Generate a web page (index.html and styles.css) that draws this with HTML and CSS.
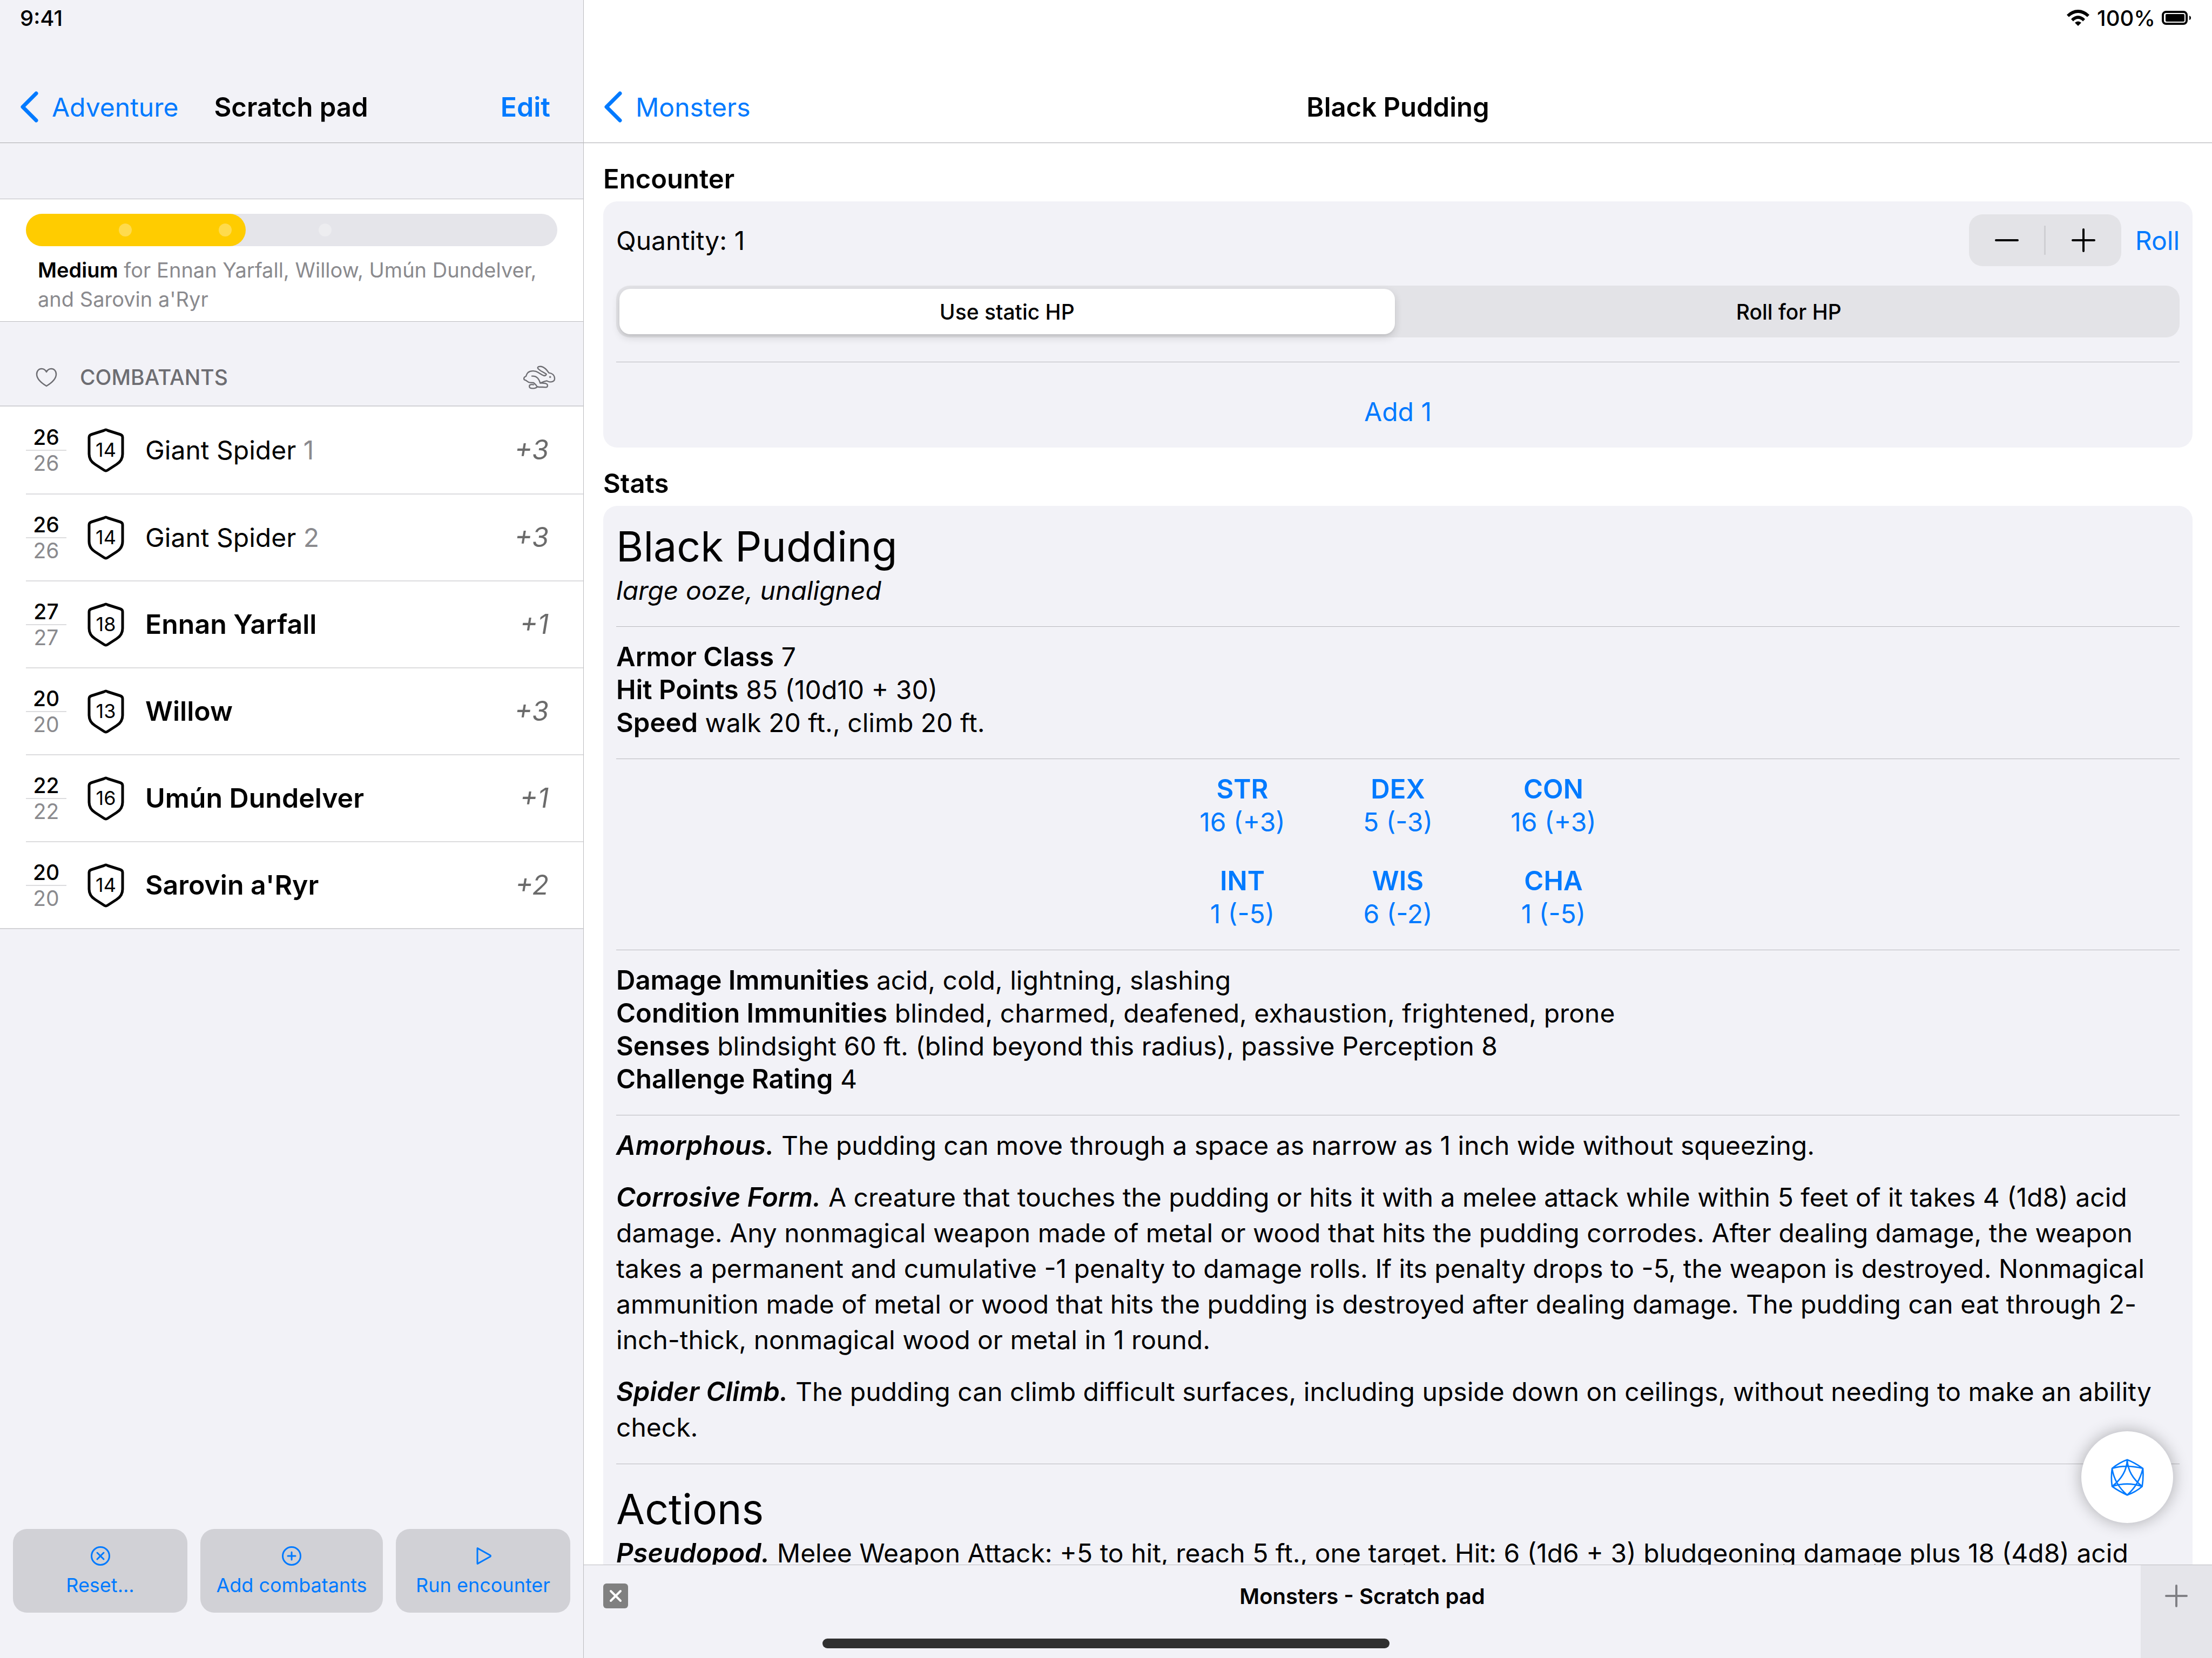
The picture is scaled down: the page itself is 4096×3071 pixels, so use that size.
FILE: index.html
```html
<!DOCTYPE html>
<html lang="en">
<head>
<meta charset="utf-8">
<meta name="viewport" content="width=device-width, initial-scale=1">
<title>Scratch pad – Black Pudding</title>
<link rel="stylesheet" href="styles.css">
</head>
<body>
<svg class="sprite" aria-hidden="true">
  <symbol id="chevron" viewBox="0 0 36 60"><path d="M31 5 6 30l25 25" fill="none" stroke="currentColor" stroke-width="7" stroke-linecap="round" stroke-linejoin="round"/></symbol>
  <symbol id="shield" viewBox="0 0 68 82"><path d="M34 3 Q35 3 38 4.500L60 11.500Q65 13 65 17V48Q65 60 54 67L37 78Q34 80 31 78L14 67Q3 60 3 48V17Q3 13 8 11.500L30 4.500Q33 3 34 3Z" fill="none" stroke="currentColor" stroke-width="5" stroke-linejoin="round"/></symbol>
</svg>
<div class="app">
  <aside class="sidebar">
    <header class="top">
      <div class="status"><time>9:41</time></div>
      <nav class="navbar">
        <a class="back" href="#adventure"><svg class="chevron"><use href="#chevron"/></svg>Adventure</a>
        <h1 class="nav-title">Scratch pad</h1>
        <button class="link-button strong">Edit</button>
      </nav>
    </header>

    <section class="difficulty">
      <div class="meter">
        <div class="meter-fill"></div>
        <i class="dot" style="left:18.7%"></i>
        <i class="dot" style="left:37.5%"></i>
        <i class="dot" style="left:56.3%"></i>
      </div>
      <p class="caption"><strong>Medium</strong> for Ennan Yarfall, Willow, Umún Dundelver, and Sarovin a'Ryr</p>
    </section>

    <section class="combatants">
      <header class="list-head">
        <svg class="heart" viewBox="0 0 40 36"><path d="M20 34C10 28 2 21 2 12 2 6 6 2 11 2c4 0 7 2 9 6 2-4 5-6 9-6 5 0 9 4 9 10 0 9-8 16-18 22Z" fill="none" stroke="currentColor" stroke-width="2.500" stroke-linejoin="round"/></svg>
        <h2>COMBATANTS</h2>
        <svg class="hare" viewBox="90 56 180 132" fill="none" stroke="currentColor" stroke-width="7" stroke-linecap="round" stroke-linejoin="round"><path d="M205 113C190 107 182 100 172 94 160 86 132 81 116 95 108 103 107 110 105 116 96 119 92 126 94 133 97 138 104 137 109 142 116 148 120 151 128 151L147 152C153 157 162 163 166 173 172 177 184 176 196 176L216 177C226 177 226 166 222 160 215 152 196 154 186 154M218 104C200 92 180 84 171 72 167 62 180 60 192 62 208 66 222 82 232 97 248 98 262 108 264 126 265 139 258 146 245 147 234 149 230 145 220 141 206 143 195 149 184 154 178 132 166 112 138 115M205 113C211 113 217 110 218 104M147 163C138 160 124 161 124 170 122 180 130 183 142 183 156 184 166 178 168 173"/><circle cx="239" cy="120" r="2"/></svg>
      </header>
      <ul class="rows">
        <li><div class="hp"><b>26</b><span>26</span></div><div class="ac"><svg><use href="#shield"/></svg><span>14</span></div><div class="name">Giant Spider <em>1</em></div><i class="mod">+3</i></li>
        <li><div class="hp"><b>26</b><span>26</span></div><div class="ac"><svg><use href="#shield"/></svg><span>14</span></div><div class="name">Giant Spider <em>2</em></div><i class="mod">+3</i></li>
        <li><div class="hp"><b>27</b><span>27</span></div><div class="ac"><svg><use href="#shield"/></svg><span>18</span></div><div class="name"><strong>Ennan Yarfall</strong></div><i class="mod">+1</i></li>
        <li><div class="hp"><b>20</b><span>20</span></div><div class="ac"><svg><use href="#shield"/></svg><span>13</span></div><div class="name"><strong>Willow</strong></div><i class="mod">+3</i></li>
        <li><div class="hp"><b>22</b><span>22</span></div><div class="ac"><svg><use href="#shield"/></svg><span>16</span></div><div class="name"><strong>Umún Dundelver</strong></div><i class="mod">+1</i></li>
        <li><div class="hp"><b>20</b><span>20</span></div><div class="ac"><svg><use href="#shield"/></svg><span>14</span></div><div class="name"><strong>Sarovin a'Ryr</strong></div><i class="mod">+2</i></li>
      </ul>
    </section>

    <footer class="actions">
      <button><svg viewBox="0 0 38 38"><circle cx="19" cy="19" r="16.500"/><path d="M13 13l12 12M25 13 13 25"/></svg>Reset...</button>
      <button><svg viewBox="0 0 38 38"><circle cx="19" cy="19" r="16.500"/><path d="M19 12v14M12 19h14"/></svg>Add combatants</button>
      <button><svg viewBox="0 0 38 38"><path d="M8 5v28q0 1 1 0L32 20q1-1 0-2L9 5q-1-1-1 0Z"/></svg>Run encounter</button>
    </footer>
  </aside>

  <main class="detail">
    <header class="top">
      <div class="status end">
        <svg class="wifi" viewBox="0 0 42 32"><path d="M0 10.500Q9 1 21 1t21 9.500l-4 4Q30 7 21 7T4 14.500ZM8 18.500Q14 12 21 12t13 6.500l-4 4Q26 18 21 18t-9 4.500ZM15 25q6-5 12 0l-6 6Z" fill="currentColor"/></svg>
        <span>100%</span>
        <svg class="battery" viewBox="0 0 55 26"><rect x="2" y="2" width="44" height="22" rx="6" fill="none" stroke="currentColor" stroke-width="4"/><rect x="7" y="6" width="35" height="14" rx="2" fill="currentColor"/><path d="M51 9q3 1 3 4t-3 4Z" fill="currentColor"/></svg>
      </div>
      <nav class="navbar centered">
        <a class="back" href="#monsters"><svg class="chevron"><use href="#chevron"/></svg>Monsters</a>
        <h1 class="nav-title">Black Pudding</h1>
      </nav>
    </header>

    <div class="scroll">
      <h2 class="section-title">Encounter</h2>
      <section class="card encounter">
        <div class="quantity">
          <output>Quantity: 1</output>
          <div class="stepper">
            <button aria-label="Decrease"><svg viewBox="0 0 44 44"><path d="M2 22h40"/></svg></button>
            <button aria-label="Increase"><svg viewBox="0 0 44 44"><path d="M2 22h40M22 2v40"/></svg></button>
          </div>
          <button class="link-button">Roll</button>
        </div>
        <div class="segmented">
          <label><input type="radio" name="hp" checked><span>Use static HP</span></label>
          <label><input type="radio" name="hp"><span>Roll for HP</span></label>
        </div>
        <hr>
        <button class="link-button add">Add 1</button>
      </section>

      <h2 class="section-title">Stats</h2>
      <section class="card stats">
        <h3>Black Pudding</h3>
        <p><i>large ooze, unaligned</i></p>
        <hr>
        <p><strong>Armor Class</strong> 7</p>
        <p><strong>Hit Points</strong> 85 (10d10 + 30)</p>
        <p><strong>Speed</strong> walk 20 ft., climb 20 ft.</p>
        <hr>
        <div class="abilities">
          <button><b>STR</b>16 (+3)</button>
          <button><b>DEX</b>5 (-3)</button>
          <button><b>CON</b>16 (+3)</button>
          <button><b>INT</b>1 (-5)</button>
          <button><b>WIS</b>6 (-2)</button>
          <button><b>CHA</b>1 (-5)</button>
        </div>
        <hr>
        <p><strong>Damage Immunities</strong> acid, cold, lightning, slashing</p>
        <p><strong>Condition Immunities</strong> blinded, charmed, deafened, exhaustion, frightened, prone</p>
        <p><strong>Senses</strong> blindsight 60 ft. (blind beyond this radius), passive Perception 8</p>
        <p><strong>Challenge Rating</strong> 4</p>
        <hr>
        <div class="traits">
          <p><strong><i>Amorphous.</i></strong> The pudding can move through a space as narrow as 1 inch wide without squeezing.</p>
          <p><strong><i>Corrosive Form.</i></strong> A creature that touches the pudding or hits it with a melee attack while within 5 feet of it takes 4 (1d8) acid damage. Any nonmagical weapon made of metal or wood that hits the pudding corrodes. After dealing damage, the weapon takes a permanent and cumulative -1 penalty to damage rolls. If its penalty drops to -5, the weapon is destroyed. Nonmagical ammunition made of metal or wood that hits the pudding is destroyed after dealing damage. The pudding can eat through 2-inch-thick, nonmagical wood or metal in 1 round.</p>
          <p><strong><i>Spider Climb.</i></strong> The pudding can climb difficult surfaces, including upside down on ceilings, without needing to make an ability check.</p>
        </div>
        <hr>
        <h3 class="sub">Actions</h3>
        <div class="traits">
          <p><strong><i>Pseudopod.</i></strong> Melee Weapon Attack: +5 to hit, reach 5 ft., one target. Hit: 6 (1d6 + 3) bludgeoning damage plus 18 (4d8) acid</p>
        </div>
      </section>
    </div>

    <footer class="tabs">
      <div class="tab">
        <button class="close" aria-label="Close tab"><svg viewBox="0 0 46 46"><path d="M14 14l18 18M32 14 14 32"/></svg></button>
        <span class="tab-title">Monsters - Scratch pad</span>
      </div>
      <button class="new-tab" aria-label="New tab"><svg viewBox="0 0 42 42"><path d="M2 21h38M21 2v38"/></svg></button>
    </footer>
    <button class="dice" aria-label="Roll dice"><svg viewBox="0 0 186 206" fill="none" stroke="currentColor" stroke-width="8" stroke-linejoin="round"><path d="M93 5Q132 20 180 53Q184 104 176 153Q140 184 93 201Q46 180 9 153Q2 104 9 53Q50 20 93 5ZM9 53Q50 40 93 41Q138 42 180 53M9 153Q93 126 176 153M93 5Q90 90 9 153M93 5Q97 90 176 153M9 53Q22 140 93 201Q160 140 180 53"/></svg></button>
  </main>
  <div class="home-indicator"></div>
</div>
</body>
</html>
```
FILE: styles.css
```css
:root {
  --blue: #007aff;
  --grey-bg: #f2f2f7;
  --grey-text: #8a8a8e;
  --line: #bcbcc0;
  --rule: #b8b8bd;
}
* { box-sizing: border-box; }
body {
  margin: 0;
  font: 48px/61px "Inter", "Liberation Sans", sans-serif;
  color: #000;
  background: #fff;
}
h1, h2, h3, p, ul { margin: 0; padding: 0; }
ul { list-style: none; }
strong, b { font-weight: 600; }
button {
  margin: 0;
  padding: 0;
  border: 0;
  background: none;
  font: inherit;
  color: var(--blue);
}
svg { display: block; flex: none; }
.sprite { position: absolute; width: 0; height: 0; }

.app {
  position: relative;
  display: grid;
  grid-template-columns: 1081px minmax(0, 1fr);
  height: 100vh;
  overflow: hidden;
}

/* Shared top bars */
.top { height: 265px; border-bottom: 1px solid #a9a9ad; }
.status {
  display: flex;
  align-items: center;
  height: 66px;
  padding: 0 38px 0 37px;
  font-size: 40px;
  font-weight: 500;
}
.status.end { justify-content: flex-end; }
.wifi { width: 42px; height: 32px; margin-right: 14px; }
.battery { width: 55px; height: 26px; margin-left: 12px; }
.navbar {
  display: flex;
  align-items: center;
  height: 130px;
  margin-top: 67px;
  padding: 0 61px 0 36px;
}
.back {
  display: flex;
  align-items: center;
  gap: 24px;
  color: var(--blue);
  text-decoration: none;
}
.chevron { width: 36px; height: 60px; }
.nav-title { font-size: 49px; font-weight: 600; }
.link-button { font-size: 48px; }
.link-button.strong { font-size: 50px; font-weight: 600; }

/* Sidebar */
.sidebar {
  display: flex;
  flex-direction: column;
  background: var(--grey-bg);
  border-right: 1px solid var(--line);
  min-height: 0;
}
.sidebar .nav-title { margin-left: 66px; }
.sidebar .link-button { margin-left: auto; }
.difficulty {
  margin-top: 103px;
  padding: 27px 48px 14px;
  border-top: 1px solid var(--line);
  border-bottom: 1px solid var(--line);
  background: #fff;
}
.meter {
  position: relative;
  height: 60px;
  border-radius: 30px;
  background: #e5e5ea;
}
.meter-fill { width: 41.4%; height: 100%; border-radius: 30px; background: #fc0; }
.dot {
  position: absolute;
  top: 18px;
  width: 24px;
  height: 24px;
  margin-left: -12px;
  border-radius: 50%;
  background: rgba(255, 255, 255, .3);
}
.caption {
  padding: 17px 22px 0;
  font-size: 38px;
  line-height: 54px;
  color: var(--grey-text);
}
.caption strong { color: #000; }
.list-head {
  display: flex;
  align-items: center;
  height: 155px;
  padding: 50px 51px 0 66px;
  color: #6d6d72;
}
.list-head h2 { margin-left: 42px; font-size: 39px; font-weight: 500; }
.heart { width: 40px; height: 36px; }
.hare { width: 60px; height: 44px; margin-left: auto; }
.rows { background: #fff; border-top: 2px solid #d2d2d6; border-bottom: 2px solid #d2d2d6; }
.rows li {
  display: grid;
  grid-template-columns: 75px 72px 1fr auto;
  column-gap: 37px;
  align-items: center;
  height: 161px;
  margin-left: 48px;
  padding-right: 64px;
}
.rows li + li { border-top: 2px solid #dcdcde; }
.hp { font-size: 39px; line-height: 46px; text-align: center; color: var(--grey-text); }
.hp b, .hp span { display: block; font-weight: 400; }
.hp b { color: #000; font-weight: 500; border-bottom: 2px solid #dcdcde; }
.ac { display: grid; justify-items: center; align-items: center; }
.ac svg { width: 68px; height: 82px; }
.ac svg, .ac span { grid-area: 1 / 1; }
.ac span { font-size: 36px; }
.name strong { font-size: 50px; }
.name em { font-style: normal; color: var(--grey-text); }
.mod { font-size: 50px; color: #6b6b6b; }
.actions {
  display: grid;
  grid-template-columns: 1fr 338px 1fr;
  gap: 24px;
  margin-top: auto;
  padding: 0 24px 84px;
}
.actions button {
  display: flex;
  flex-direction: column;
  align-items: center;
  gap: 12px;
  height: 155px;
  padding-top: 31px;
  border-radius: 26px;
  background: #d1d1d6;
  font-size: 36px;
  line-height: 46px;
}
.actions svg {
  width: 38px;
  height: 38px;
  fill: none;
  stroke: currentColor;
  stroke-width: 3;
  stroke-linecap: round;
}

/* Detail pane */
.detail {
  position: relative;
  display: grid;
  grid-template-rows: auto minmax(0, 1fr) auto;
  min-width: 0;
  min-height: 0;
}
.navbar.centered { display: grid; grid-template-columns: 1fr auto 1fr; padding-right: 36px; }
.scroll { overflow: hidden; padding: 0 36px; }
.section-title { padding: 36px 0 11px; font-size: 49px; font-weight: 600; line-height: 61px; }
.card { padding: 24px; border-radius: 26px; background: var(--grey-bg); }
.card hr { height: 1px; margin: 36px 0 25px; border: 0; background: var(--rule); }
.encounter { height: 456px; }
.quantity { display: flex; align-items: center; gap: 26px; }
.quantity output { flex: 1; }
.stepper {
  display: flex;
  align-items: center;
  width: 282px;
  height: 96px;
  border-radius: 25px;
  background: #e3e3e7;
}
.stepper button { display: grid; place-items: center; flex: 1; height: 54px; color: #000; }
.stepper button + button { border-left: 3px solid #cfcfd3; }
.stepper svg { width: 44px; height: 44px; stroke: currentColor; stroke-width: 4; stroke-linecap: round; }
.segmented {
  display: grid;
  grid-template-columns: 1fr 1fr;
  height: 96px;
  margin-top: 36px;
  border-radius: 25px;
  background: #e3e3e7;
  font-size: 39px;
  font-weight: 500;
}
.segmented label { display: grid; margin: 6px; }
.segmented input { grid-area: 1 / 1; appearance: none; margin: 0; border-radius: 20px; }
.segmented input:checked { background: #fff; box-shadow: 0 6px 16px rgba(0, 0, 0, .14), 0 3px 3px rgba(0, 0, 0, .04); }
.segmented span { grid-area: 1 / 1; place-self: center; z-index: 1; }
.encounter hr { margin-top: 45px; }
.link-button.add { display: block; width: 100%; padding-top: 36px; }
.stats { border-radius: 26px 26px 0 0; }
.stats h3 { font-size: 77px; font-weight: 400; line-height: 102px; }
.stats h3.sub { padding-top: 7px; }
.stats strong { font-size: 49px; line-height: 48px; }
.abilities {
  display: grid;
  grid-template-columns: repeat(3, 288px);
  justify-content: center;
  row-gap: 48px;
}
.abilities b { display: block; font-size: 49px; }
.traits { margin: -2px 0; line-height: 66px; }
.traits p + p { margin-top: 30px; }

/* Bottom tab bar */
.tabs {
  position: relative;
  display: flex;
  height: 173px;
  border-top: 1px solid var(--line);
  background: var(--grey-bg);
}
.tab {
  display: grid;
  grid-template-columns: 46px 1fr 46px;
  align-items: center;
  flex: 1;
  height: 114px;
  padding: 0 36px;
}
.tab-title { font-size: 40px; font-weight: 600; text-align: center; }
.close { border-radius: 6px; background: #808080; color: #fff; }
.close svg { width: 46px; height: 46px; stroke: currentColor; stroke-width: 4; stroke-linecap: round; }
.new-tab { display: flex; width: 132px; padding: 36px 45px 0; background: #e5e5ea; color: #808085; }
.new-tab svg { width: 42px; height: 42px; stroke: currentColor; stroke-width: 4; stroke-linecap: round; }

/* Floating over the page */
.dice {
  position: absolute;
  right: 72px;
  bottom: 250px;
  display: grid;
  place-items: center;
  width: 170px;
  height: 170px;
  border-radius: 50%;
  background: #fff;
  box-shadow: 0 0 30px rgba(0, 0, 0, .3);
}
.dice svg { width: 62px; height: 69px; }
.home-indicator {
  position: absolute;
  left: 50%;
  bottom: 18px;
  width: 1050px;
  height: 18px;
  margin-left: -525px;
  border-radius: 9px;
  background: #303030;
}
```
